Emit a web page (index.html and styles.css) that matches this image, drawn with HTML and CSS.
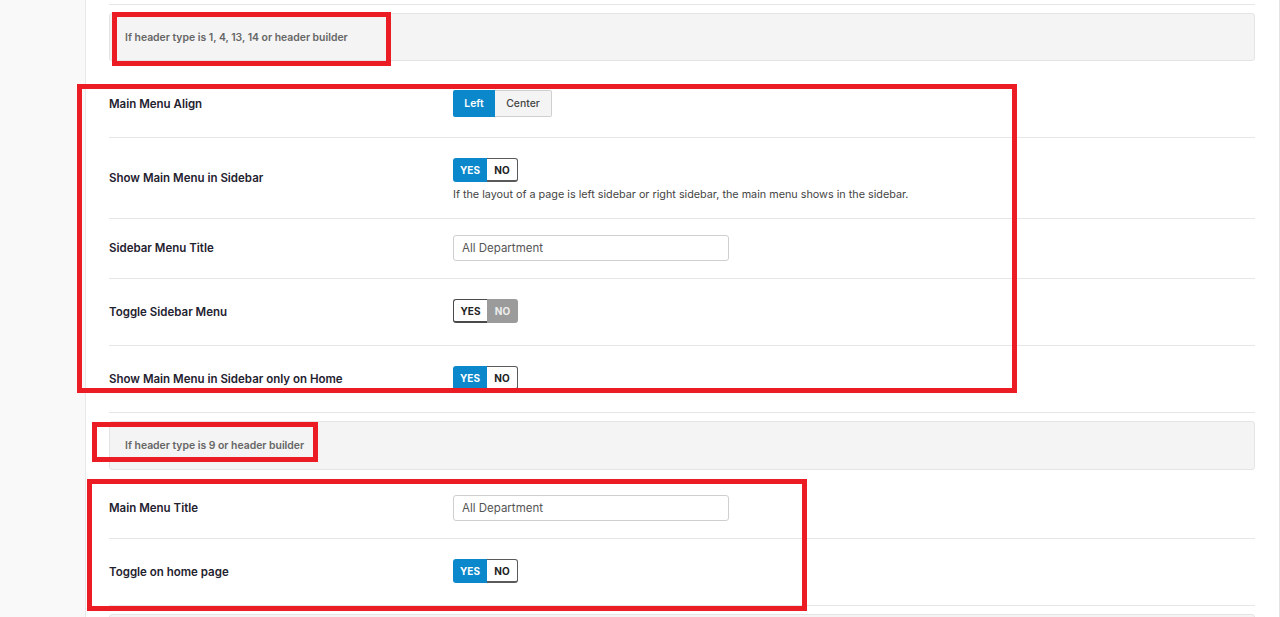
FILE: index.html
```html
<!DOCTYPE html>
<html lang="en">
<head>
  <meta charset="UTF-8" />
  <meta name="viewport" content="width=device-width, initial-scale=1.0"/>
  <title>Theme Options - Menu</title>
  <link rel="stylesheet" href="styles.css">
</head>
<body>
  <div class="page">
    <div class="panel">
      <div class="row-tail"></div>

      <div class="notice">If header type is 1, 4, 13, 14 or header builder</div>

      <div class="row">
        <div class="label">Main Menu Align</div>
        <div class="field">
          <div class="btn-group">
            <span class="btn active">Left</span>
            <span class="btn">Center</span>
          </div>
        </div>
      </div>

      <div class="row row-desc">
        <div class="label">Show Main Menu in Sidebar</div>
        <div class="field">
          <div class="toggle is-on"><span class="yes">YES</span><span class="no">NO</span></div>
          <p class="desc">If the layout of a page is left sidebar or right sidebar, the main menu shows in the sidebar.</p>
        </div>
      </div>

      <div class="row row-input">
        <div class="label">Sidebar Menu Title</div>
        <div class="field">
          <input class="text-input" type="text" value="All Department">
        </div>
      </div>

      <div class="row">
        <div class="label">Toggle Sidebar Menu</div>
        <div class="field">
          <div class="toggle is-off"><span class="yes">YES</span><span class="no">NO</span></div>
        </div>
      </div>

      <div class="row">
        <div class="label">Show Main Menu in Sidebar only on Home</div>
        <div class="field">
          <div class="toggle is-on"><span class="yes">YES</span><span class="no">NO</span></div>
        </div>
      </div>

      <div class="notice notice-tall">If header type is 9 or header builder</div>

      <div class="row row-input">
        <div class="label">Main Menu Title</div>
        <div class="field">
          <input class="text-input" type="text" value="All Department">
        </div>
      </div>

      <div class="row">
        <div class="label">Toggle on home page</div>
        <div class="field">
          <div class="toggle is-on"><span class="yes">YES</span><span class="no">NO</span></div>
        </div>
      </div>

      <div class="notice"></div>
    </div>

    <!-- highlight frames -->
    <div class="mark mark-1"></div>
    <div class="mark mark-2"></div>
    <div class="mark mark-3"></div>
    <div class="mark mark-4"></div>
  </div>
</body>
</html>
```

FILE: styles.css
```css
:root {
  --blue: #0a88cb;
  --line: #e6e6e6;
  --mark: #ec1c24;
}
html, body {
  margin: 0;
  padding: 0;
  height: 617px;
  overflow: hidden;
}
body {
  background: #f9f9f9;
  font-family: "Inter", "Liberation Sans", sans-serif;
  color: #1f2230;
}
.page {
  position: relative;
  padding-left: 85px;
}
.panel {
  background: #fff;
  border-left: 1px solid #e8e8e8;
  border-right: 1px solid #e4e4e4;
  padding: 0 24px 0 23px;
  min-height: 617px;
}
.row-tail {
  height: 4px;
  border-bottom: 1px solid var(--line);
}
.notice {
  margin: 8px 0 9px;
  height: 46px;
  background: #f4f4f4;
  border: 1px solid #e4e4e4;
  border-radius: 3px;
  display: flex;
  align-items: center;
  padding-left: 15px;
  font-size: 10.4px;
  font-weight: 600;
  color: #666;
}
.notice-tall {
  height: 47px;
}
.row {
  display: grid;
  grid-template-columns: 344px 1fr;
  align-items: center;
  padding: 20px 0;
  border-bottom: 1px solid var(--line);
}
.row-desc {
  padding-bottom: 16px;
}
.row-desc .label {
  margin-bottom: 5px;
}
.row-input {
  padding: 16px 0 17px;
}
.label {
  font-size: 11.5px;
  font-weight: 600;
  color: #1f2230;
}
.btn-group {
  display: flex;
  height: 27px;
}
.btn {
  display: flex;
  align-items: center;
  justify-content: center;
  font-size: 10.4px;
  font-weight: 500;
  box-sizing: border-box;
}
.btn.active {
  width: 42px;
  background: var(--blue);
  color: #fff;
  font-weight: 600;
  border-radius: 2px 0 0 2px;
}
.btn:not(.active) {
  width: 57px;
  background: #f4f4f4;
  border: 1px solid #cfcfcf;
  border-left: 0;
  border-radius: 0 2px 2px 0;
  color: #444;
}
.toggle {
  display: flex;
  height: 24px;
  margin-bottom: 2px;
  width: 65px;
}
.toggle span {
  display: flex;
  align-items: center;
  justify-content: center;
  box-sizing: border-box;
  font-size: 10px;
  font-weight: 700;
}
.toggle .yes {
  width: 34px;
  border-radius: 3px 0 0 3px;
}
.toggle .no {
  width: 31px;
  border-radius: 0 3px 3px 0;
}
.is-on .yes {
  background: var(--blue);
  color: #fff;
}
.is-on .no {
  background: #fff;
  color: #222;
  border: 1px solid #5a5a5a;
  border-left: 0;
  border-bottom-width: 2px;
}
.is-off .yes {
  background: #fff;
  color: #222;
  border: 1px solid #4a4a4a;
  border-right: 0;
  border-bottom-width: 2px;
}
.is-off .no {
  background: #9b9b9b;
  color: #eee;
}
.desc {
  margin: 6px 0 0;
  font-size: 10.8px;
  line-height: 14px;
  color: #444;
}
.text-input {
  display: block;
  box-sizing: border-box;
  width: 276px;
  height: 26px;
  margin: 0;
  padding: 0 8px;
  border: 1px solid #cfcfcf;
  border-radius: 3px;
  font-family: inherit;
  font-size: 11.5px;
  color: #555;
  outline: none;
}
.mark {
  position: absolute;
  border: 5px solid var(--mark);
  box-sizing: border-box;
  pointer-events: none;
}
.mark-1 { left: 112px; top: 12px; width: 279px; height: 54px; }
.mark-2 { left: 77px; top: 84px; width: 940px; height: 309px; }
.mark-3 { left: 92px; top: 422px; width: 226px; height: 40px; }
.mark-4 { left: 87px; top: 479px; width: 720px; height: 132px; }
```
